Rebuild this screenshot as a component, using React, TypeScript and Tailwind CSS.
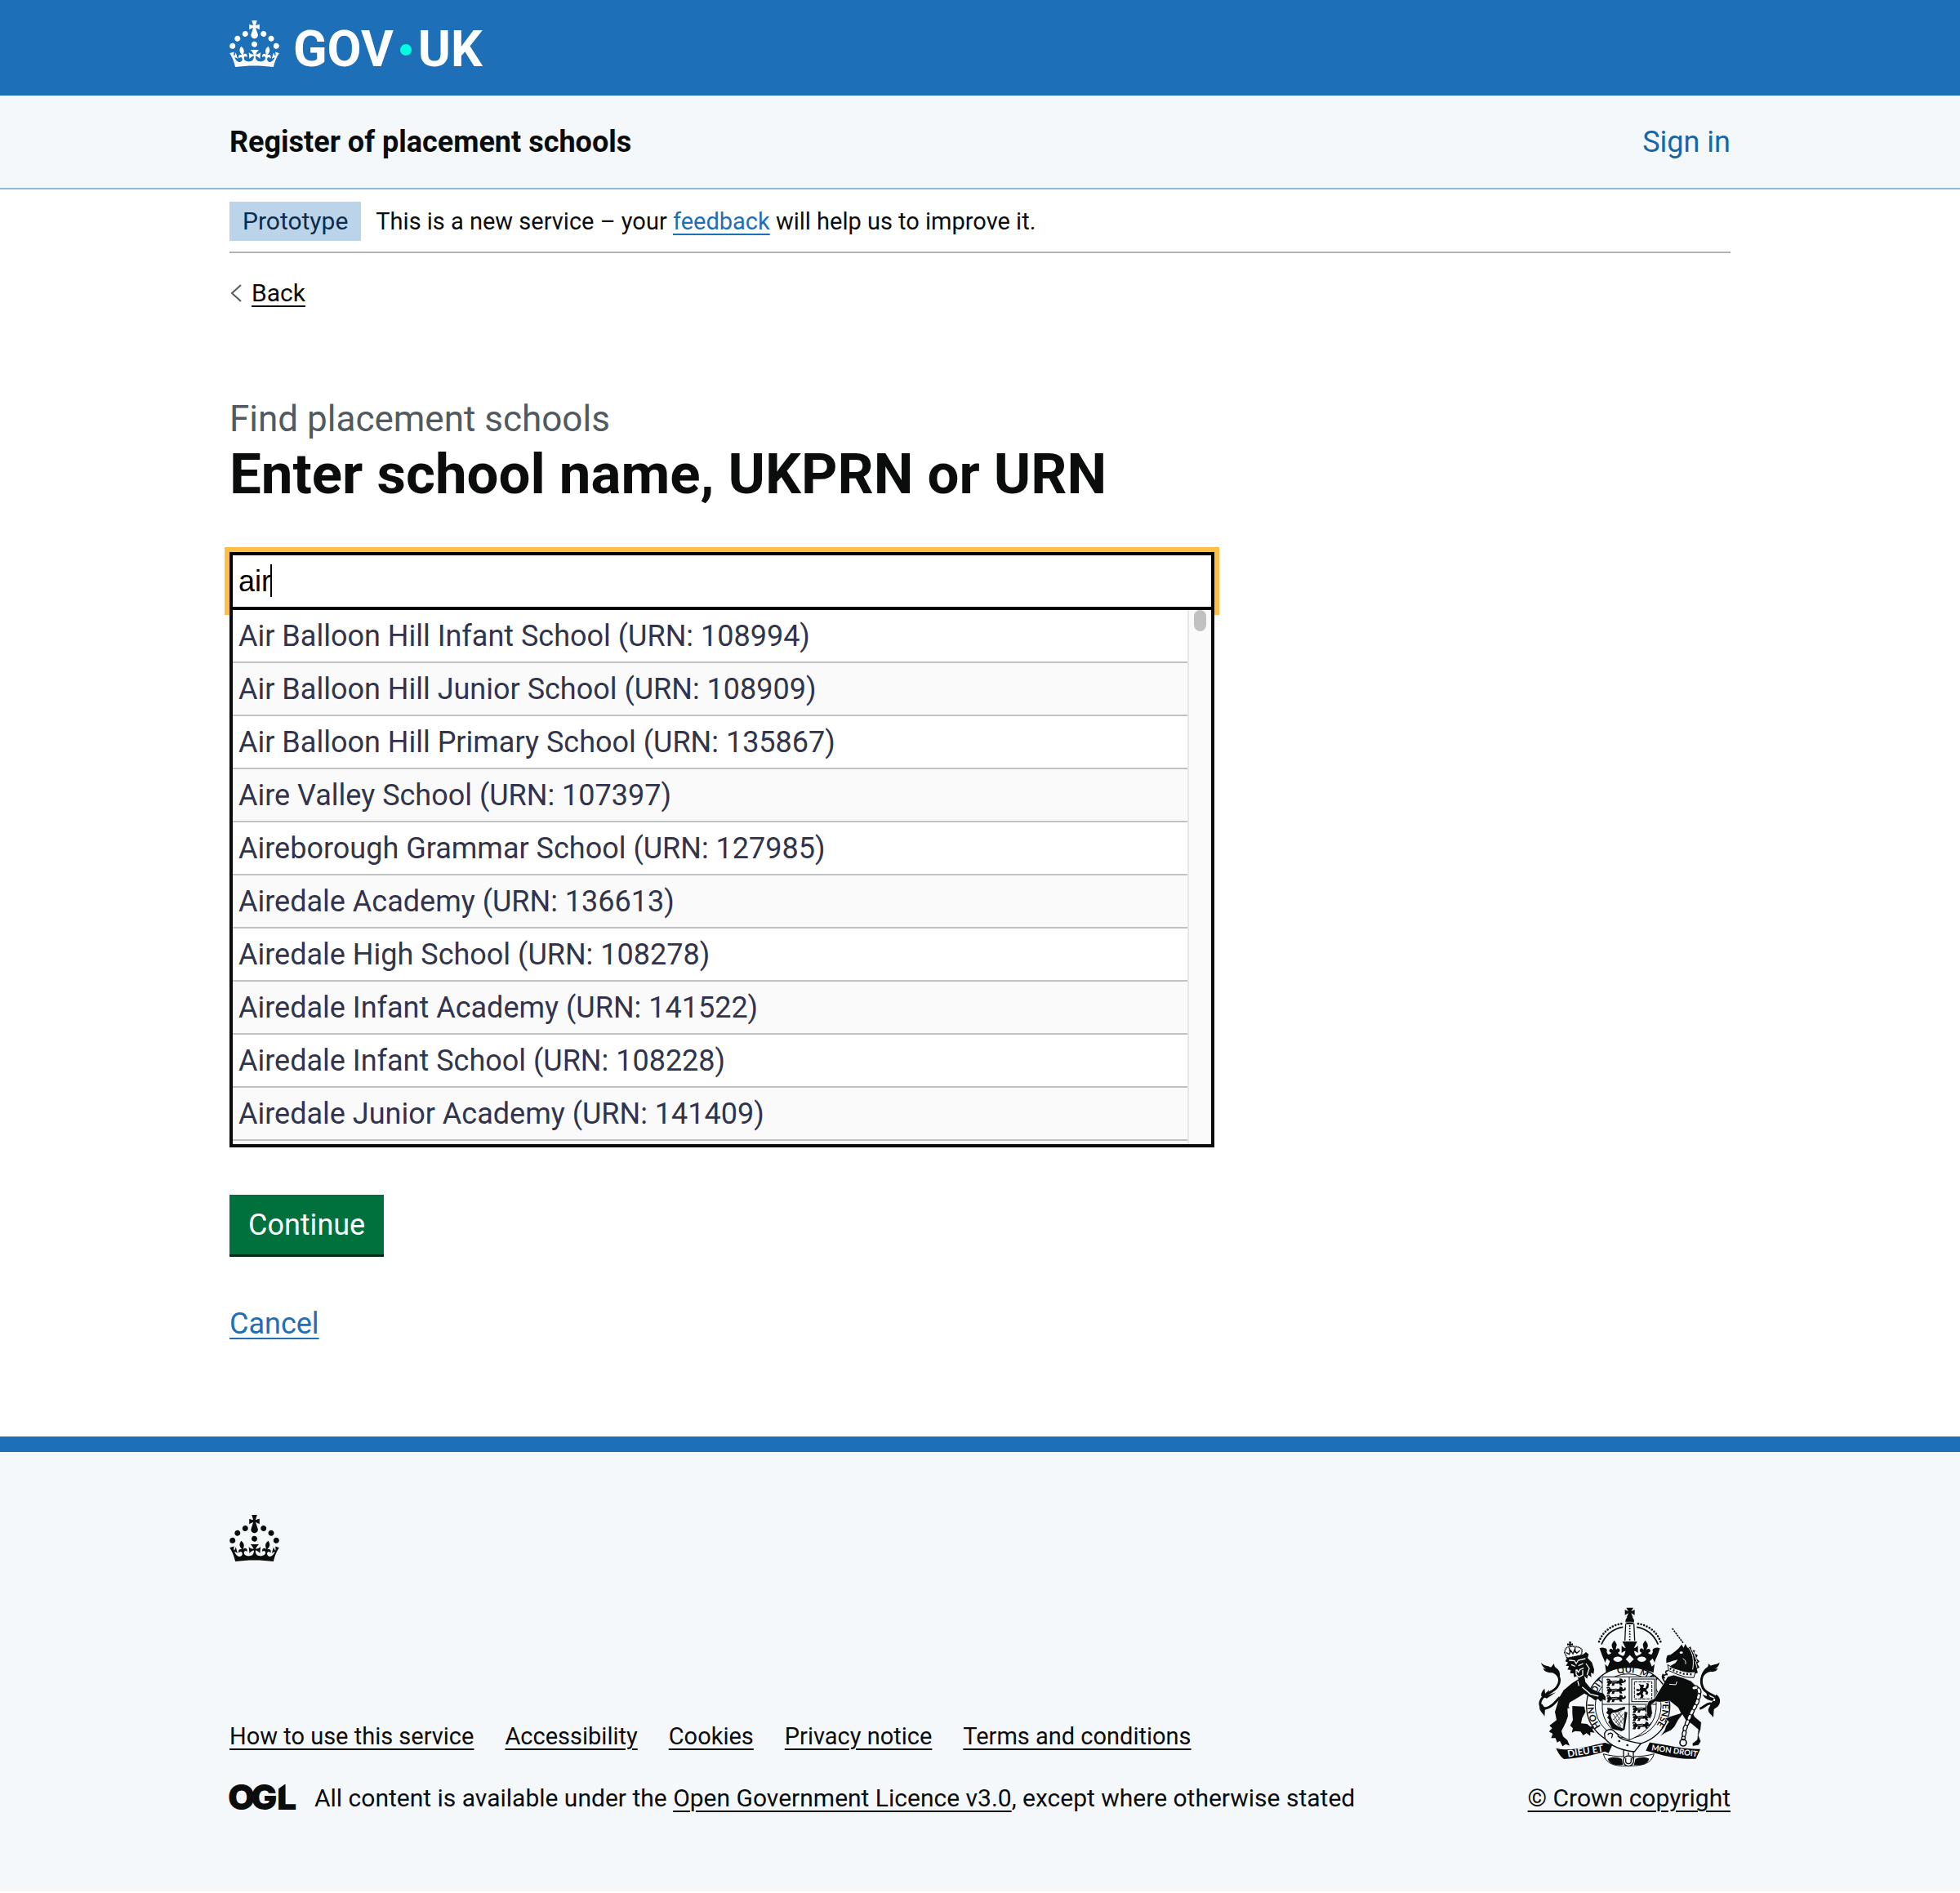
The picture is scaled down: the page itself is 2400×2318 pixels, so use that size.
import React, { useState } from "react";

const schools = [
  "Air Balloon Hill Infant School (URN: 108994)",
  "Air Balloon Hill Junior School (URN: 108909)",
  "Air Balloon Hill Primary School (URN: 135867)",
  "Aire Valley School (URN: 107397)",
  "Aireborough Grammar School (URN: 127985)",
  "Airedale Academy (URN: 136613)",
  "Airedale High School (URN: 108278)",
  "Airedale Infant Academy (URN: 141522)",
  "Airedale Infant School (URN: 108228)",
  "Airedale Junior Academy (URN: 141409)",
];

const footerLinks = [
  "How to use this service",
  "Accessibility",
  "Cookies",
  "Privacy notice",
  "Terms and conditions",
];

const underlined = "underline decoration-2 underline-offset-[5px]";

function Crown() {
  return (
    <svg viewBox="0 0 32 30" className="h-[57px] w-[61px] shrink-0" fill="currentColor" aria-hidden="true">
      <path d="M22.6 10.4c-1 .4-2-.1-2.4-1-.4-.9.1-2 1-2.4.9-.4 2 .1 2.4 1s-.1 2-1 2.4m-5.9 6.7c-.9.4-2-.1-2.4-1-.4-.9.1-2 1-2.4.9-.4 2 .1 2.4 1s-.1 2-1 2.4m10.8-3.7c-1 .4-2-.1-2.4-1-.4-.9.1-2 1-2.4.9-.4 2 .1 2.4 1s0 2-1 2.4m3.3 4.8c-1 .4-2-.1-2.4-1-.4-.9.1-2 1-2.4.9-.4 2 .1 2.4 1s-.1 2-1 2.4M17 4.7l2.3 1.2V2.5l-2.3.7-.2-.2.9-3h-3.4l.9 3-.2.2c-.1.1-2.3-.7-2.3-.7v3.4L15 4.7c.1.1.1.2.2.2l-1.3 4c-.1.2-.1.4-.1.6 0 1.1.8 2 1.9 2.2h.7c1-.2 1.9-1.1 1.9-2.1 0-.2 0-.4-.1-.6l-1.3-4c-.1-.2 0-.2.1-.3m-7.6 5.7c.9.4 2-.1 2.4-1 .4-.9-.1-2-1-2.4-.9-.4-2 .1-2.4 1s0 2 1 2.4m-5 3c.9.4 2-.1 2.4-1 .4-.9-.1-2-1-2.4-.9-.4-2 .1-2.4 1s.1 2 1 2.4m-3.2 4.8c.9.4 2-.1 2.4-1 .4-.9-.1-2-1-2.4-.9-.4-2 .1-2.4 1s0 2 1 2.4m14.8 11c4.4 0 8.6.3 12.3.8 1.1-4.5 2.4-7 3.7-8.8l-2.5-.9c.2 1.3.3 1.9 0 2.7-.4-.4-.8-1.1-1.1-2.3l-1.2 4c.7-.5 1.3-.8 2-.9-1.1 2.5-2.6 3.1-3.5 3-1.1-.2-1.7-1.2-1.5-2.1.3-1.2 1.5-1.5 2.1-.1 1.1-2.3-.8-3-2-2.3 1.9-1.9 2.1-3.5.6-5.6-2.1 1.6-2.1 3.2-1.2 5.5-1.2-1.4-3.2-.6-2.5 1.6.9-1.4 2.1-.5 1.9.8-.2 1.1-1.7 2.1-3.5 1.9-2.7-.2-2.9-2.1-2.9-3.6.7-.1 1.9.5 2.9 1.9l.4-4.3c-1.1 1.1-2.1 1.4-3.2 1.4.4-1.2 2.1-3 2.1-3h-5.4s1.7 1.9 2.1 3c-1.1 0-2.1-.2-3.2-1.4l.4 4.3c1-1.4 2.2-2 2.9-1.9-.1 1.5-.2 3.4-2.9 3.6-1.9.2-3.4-.8-3.5-1.9-.2-1.3 1-2.2 1.9-.8.7-2.3-1.2-3-2.5-1.6.9-2.2.9-3.9-1.2-5.5-1.5 2-1.3 3.7.6 5.6-1.2-.7-3.1 0-2 2.3.6-1.4 1.8-1.1 2.1.1.2.9-.3 1.9-1.5 2.1-.9.2-2.4-.5-3.5-3 .6 0 1.2.3 2 .9l-1.2-4c-.3 1.1-.7 1.9-1.1 2.3-.3-.8-.2-1.4 0-2.7l-2.9.9C1.3 23 2.6 25.5 3.7 30c3.7-.5 7.9-.8 12.3-.8" />
    </svg>
  );
}

function OglLogo() {
  return (
    <svg viewBox="0 0 79 33" className="h-[33px] w-[79px] shrink-0 overflow-visible" role="img" aria-label="Open Government Licence">
      <text x="-2 26 58" y="32" fontFamily="Inter, sans-serif" fontWeight="900" fontSize="43" fill="#0b0c0c">
        OGL
      </text>
      <path d="M59 0h10l-10 7z" fill="#f4f8fb" />
    </svg>
  );
}

/* A small walking lion, used three to a quarter on the shield. */
function Lion({ x, y }: { x: number; y: number }) {
  return (
    <g transform={`translate(${x} ${y})`}>
      <path d="M4 3c6-5 14-2 16 5 8 3 16-3 24 0 8 2 10-3 8-8 8-1 14 4 12 10 4-1 8-3 7-8 8 4 5 13-6 14l-6 1 4 8h-9l-4-7c-6 2-10 0-16 1l-2 8h-9l3-9-8 2-3 8-10-1 5-9-6-4 5-2z" />
      <path d="M24 14l20-3M8 7h6" stroke="#f4f8fb" strokeWidth="2" fill="none" />
    </g>
  );
}

/* Right half of the crown above the shield; mirrored for the left half. */
function CrownHalf() {
  return (
    <g>
      <path d="M432 128c34 6 64 27 79 64" fill="none" stroke="#0b0c0c" strokeWidth="5" />
      <path d="M438 116c36 5 72 30 84 72" fill="none" stroke="#0b0c0c" strokeWidth="8" strokeLinecap="round" strokeDasharray="0 11" />
      <path d="M422 116l3 62" fill="none" stroke="#0b0c0c" strokeWidth="4" />
      <path d="M406 181h28c-2 6-8 16-12 25 8-3 12-7 15-10v28c-4-5-8-8-14-8 1 8 4 14 8 18 8-2 16-6 20-12-8-2-10-9-5-14 4-3 9-1 11 4 3-8-2-13-2-20 2-7 6-11 9-15 5 6 11 14 9 22-1 5-5 8-4 13 4-5 10-5 13 0 2 6-2 10-8 11 4 4 8 6 13 6l5-10c-3-6 0-12 6-13 5-3 12-4 20 0l-7 20c-5 14-13 26-13 38l-4 32c-28-12-54-18-88-18z" />
      <path d="M406 230l16 16-16 16M434 246c6-13 28-13 34 0-6 13-28 13-34 0zM480 254l11-11 9 20-12 10z" fill="#f4f8fb" />
    </g>
  );
}

function CoatOfArms() {
  return (
    <svg viewBox="72 52 666 591" className="h-[197px] w-[222px]" fill="#0b0c0c" role="img" aria-label="Royal coat of arms">
      <defs>
        <path id="garterText" d="M304 497A126 123 0 1 1 498 497" />
        <clipPath id="shieldShape">
          <path d="M306 311h198v108c0 60-40 100-99 124-59-24-99-64-99-124z" />
        </clipPath>
      </defs>

      {/* Garter */}
      <ellipse cx="401" cy="418" rx="153" ry="144" fill="#f4f8fb" stroke="#0b0c0c" strokeWidth="4" />
      <ellipse cx="401" cy="418" rx="121" ry="118" fill="none" stroke="#0b0c0c" strokeWidth="3" />
      <g fontFamily="Lato, sans-serif" fontWeight="700" fontSize="33">
        <text><textPath href="#garterText" startOffset="6">HONI</textPath></text>
        <text><textPath href="#garterText" startOffset="112">SOIT</textPath></text>
        <text><textPath href="#garterText" startOffset="242">QUI</textPath></text>
        <text><textPath href="#garterText" startOffset="322">MAL</textPath></text>
        <text><textPath href="#garterText" startOffset="448">PENSE</textPath></text>
      </g>

      {/* Shield */}
      <path d="M306 311h198v108c0 60-40 100-99 124-59-24-99-64-99-124z" fill="#f4f8fb" stroke="#0b0c0c" strokeWidth="3" />
      <g clipPath="url(#shieldShape)">
        <Lion x={317} y={317} />
        <Lion x={317} y={347} />
        <Lion x={317} y={377} />
        <rect x="414" y="319" width="84" height="83" fill="none" stroke="#0b0c0c" strokeWidth="3" />
        <rect x="424" y="329" width="64" height="63" fill="none" stroke="#0b0c0c" strokeWidth="3" strokeDasharray="12 3" />
        <path d="M440 336l10 5c5-4 10-2 9 4l-4 6 9 2 6-12-3-8 10 3-1 14-9 9 8 9-3 9-8-2 2-7-8-4-4 8 4 9-4 9-10-1 4-6-2-8-8 6-8-5 4-5 8-2 5-7-12 2-6-6 6-3 8 2 3-8z" />
        <Lion x={412} y={416} />
        <Lion x={412} y={446} />
        <Lion x={412} y={476} />
        <path d="M324 424l16 3 8 6c14 0 22-10 42-12l-2 10c-16 2-24 12-42 12-10 2-10 12-6 20 4 16 16 28 34 34l8 4 6-62 10 2-10 64-12 6c-10-6-24-4-34-10-6-8-6-16-14-22l4-10-8-8 6-10-10-8 6-8z" />
        <path d="M345 447l30 46M354 443l26 40M364 440l20 28M348 466l24 30M378 434l-34 36M384 446l-30 34M384 464l-22 26" stroke="#0b0c0c" strokeWidth="2" />
        <path d="M405 311v232M306 412h198" stroke="#0b0c0c" strokeWidth="3" />
      </g>

      {/* Crown */}
      <g>
        <path d="M394 57h26l-8 14 13-7v20l-13-7 7 16h-24l7-16-13 7v-20l13 7z" />
        <circle cx="407" cy="106" r="16" />
        <path d="M392 110h30" stroke="#f4f8fb" strokeWidth="2" />
        <path d="M392 118h30v58h-30z" fill="#f4f8fb" />
        <path d="M407 124v52" stroke="#0b0c0c" strokeWidth="6" strokeLinecap="round" strokeDasharray="0 10" />
        <CrownHalf />
        <g transform="translate(814 0) scale(-1 1)">
          <CrownHalf />
        </g>
      </g>

      {/* Lion supporter */}
      <g>
        <path d="M150 386c-14 14-26 36-50 40-20 4-28-14-18-32 10-20 42-24 58-46 16-22 8-46-12-54" fill="none" stroke="#0b0c0c" strokeWidth="9" />
        <path d="M81 258c10 14 24 10 36 18l12-14c0 8 2 14 10 18 10 8 14 20 10 34-8-14-20-18-34-18-16-2-24-8-26-16l10 2c-10-6-16-14-18-24zM82 382c-2-12 4-20 12-28l2 18 16-14-6 20 30-10-34 22zM84 410l12 16-2 30c-6-12-22-20-18-38z" />
        <path d="M183 182h10l-3 8 8-2v8l-8-2 2 8h-8l1-8-8 2v-8l8 2z" />
        <path d="M168 222c0-14 8-22 20-22 16-2 40 0 44 14l-4 20-52 8z" fill="#f4f8fb" stroke="#0b0c0c" strokeWidth="5" strokeDasharray="4 2" />
        <path d="M174 222l10 6 6-14 8 12 6-14 8 12 12-10M184 204l4 20M206 202v20" fill="none" stroke="#0b0c0c" strokeWidth="4" />
        <path d="M176 242L236 228l10-8 10 8-4 14 16 16 8 26-2 16-10-4 2 16-12-8-4 14-10-10 4 22 18 22 28 14 20 6 8 12v14l-10-4-8 8-10-10-10 6-18-14-22-12-25 16-29 17-8 25 2 25-8 23-16 32 6 20 16 14 8 20-14-6-12 8-10-20-10 6-6-16-16 0 6-16-14-8 12-12-10-10 26-20-6-30 17-55 15-25 30-25 24-15-4-12-12 4-2-14-12 0 2-12-12-2 6-12-12-2 8-12-10-4z" />
        <path d="M184 250l20 2 6 10 8-12 26-6M192 266l14 6M218 270l18-8M212 284l6 10 6-10 14-6M210 284v18l10 10 14-8v-18M246 262l12 18-8 24M216 326l4 18M232 348l30 26 30 8" fill="none" stroke="#f4f8fb" strokeWidth="4" />
        <path d="M196 418l44 2 4 20-12 22-4 20 22 2 12 10 14-2-6 12 8 12-16-2v14l-14-10-12 8-10-14-20-2-12 6 4-16-10-10 10-20-2-25z" />
        <path d="M184 404c-8 6-8 14 0 22" fill="none" stroke="#0b0c0c" strokeWidth="4" />
      </g>

      {/* Unicorn supporter */}
      <g>
        <path d="M563 133l42 56" fill="none" stroke="#0b0c0c" strokeWidth="5" strokeDasharray="7 3" />
        <path d="M541 244l4-12 12-2 18-14 12-10 10-14 8 12 6-14 8 14 12-4 2 12 14 2-4 10 14 8-6 10 12 12-8 8 8 14-10 6 4 14-12 4-2 12-16-4-20 4c-20-10-30-24-44-28l-12-8 6-6 18-10 8-12-18 4-10 4-14 4z" />
        <ellipse cx="596" cy="222" rx="6" ry="4" fill="#f4f8fb" />
        <path d="M622 202c16 20 22 46 16 82M634 208l14 30M644 228l10 28M648 254l6 24M602 244c8 4 12 10 10 20" fill="none" stroke="#f4f8fb" strokeWidth="3" />
        <path d="M546 266l18 12 20 6 18 6 22 4 24-2-6 22-30-2-30-10-32-14z" fill="#f4f8fb" stroke="#0b0c0c" strokeWidth="3" />
        <path d="M554 280l24 12 28 8 30 2" fill="none" stroke="#0b0c0c" strokeWidth="7" strokeDasharray="6 7" />
        <path d="M546 310l22-6 34 10 30 12 20 20 6 34-6 34-14 28 8 16 24 20-2 24-8 24 8 22-8 14-22 4-2-10 18-14 4-38-24-20-22-14-12-20-14 18-14 26-14 14-22 10-18 12 16-22 6-18 10-14-14-12 20-8 38-12-10-20-30-24-36 4-18-2-14 12 4 30-8 22-12-12-2-32 8-22 22-10z" stroke="#f4f8fb" strokeWidth="2" />
        <path d="M548 288c-14 0-10 12-2 14-14 0-22 8-10 14M530 300c-8 12 0 20 6 30" fill="none" stroke="#0b0c0c" strokeWidth="5" />
        <path d="M552 338l24 2 4-12" fill="none" stroke="#f4f8fb" strokeWidth="3" />
        <path d="M664 428c20-6 26-24 44-18 20 4 20-14 16-22-8-14-36-12-48-36-12-26-6-56 20-64" fill="none" stroke="#0b0c0c" strokeWidth="9" />
        <path d="M737 258c-10 8-22 6-32 12l-10-8c2 10-2 14-10 18-10 10-18 24-16 40 8-14 20-26 34-28 16 2 24-4 28-12l-12 2c10-4 16-14 18-24zM724 376c16 8 20 30 6 44l-14 10-2 30c-8-12-22-16-18-32zM722 392l-20-8-14-20 2 18-16-6c8 16 24 24 46 24z" />
        <path d="M642 352c14-6 22 6 20 22l-8 30-24 46-20 50-6 36" fill="none" stroke="#0b0c0c" strokeWidth="17" strokeLinecap="round" strokeDasharray="9 12" />
        <path d="M642 352c14-6 22 6 20 22l-8 30-24 46-20 50-6 36" fill="none" stroke="#f4f8fb" strokeWidth="9" strokeLinecap="round" strokeDasharray="9 12" />
        <circle cx="603" cy="553" r="12" fill="none" stroke="#0b0c0c" strokeWidth="5" />
      </g>

      {/* Strap and buckle */}
      <path d="M314 520c4-14 20-20 32-12l18 16c-6 12 34 24 84 32l-24 30c-40-4-84-18-108-48z" fill="#f4f8fb" stroke="#0b0c0c" strokeWidth="4" />
      <path d="M326 524c4-8 14-8 18-2l-4 14M384 580v36a18 18 0 0 0 36 0v-32" fill="none" stroke="#0b0c0c" strokeWidth="4" />
      <circle cx="368" cy="547" r="4" />
      <circle cx="398" cy="562" r="4" />
      <path d="M310 594c20 6 50 10 76 10 0 20 6 28 16 34-40 2-82-2-92-44zM496 594c-20 6-50 10-74 10 0 20-8 26-20 34 48 0 84-6 94-44z" fill="#f4f8fb" stroke="#0b0c0c" strokeWidth="3" />
      <path d="M326 612c16-10 38-6 52 0l4 22c-24 4-50-2-56-22zM478 612c-16-10-36-6-50 0l-6 22c24 4 50-2 56-22z" />
      <circle cx="402" cy="620" r="19" fill="#f4f8fb" stroke="#0b0c0c" strokeWidth="4" />
      <path d="M392 610v10a10 10 0 0 0 20 0v-10M402 588v10" fill="none" stroke="#0b0c0c" strokeWidth="4" />

      {/* Motto ribbons */}
      <path d="M136 573c60 14 118-8 180-20l27 8-14 30-14-6c-44 14-96 24-150 28-16-12-22-26-29-40z" />
      <path d="M666 576c-64 2-124-16-186-24l-14 30 24 6c46 14 100 26 160 24z" />
      <g fontFamily="Lato, sans-serif" fontWeight="700" fill="#f4f8fb">
        <text transform="translate(180 606) rotate(-9)" fontSize="35">DIEU ET</text>
        <text transform="translate(486 581) rotate(8)" fontSize="29">MON DROIT</text>
      </g>
    </svg>
  );
}

export default function App() {
  const [query, setQuery] = useState("air");

  return (
    <div className="bg-white font-[Roboto,sans-serif] text-[#0b0c0c]">
      <header>
        <div className="bg-[#1d70b8] px-8 pt-[25px] pb-7 text-white">
          <a href="#" aria-label="GOV.UK" className="mx-auto flex max-w-[1838px] items-start gap-[17px]">
            <Crown />
            <span className="flex items-center gap-2 pt-[7px] text-[61px] leading-[57px] font-bold">
              <span>GOV</span>
              <span className="size-[14px] rounded-full bg-[#00ffe0]" />
              <span>UK</span>
            </span>
          </a>
        </div>
        <div className="border-b-2 border-[#8eb8dc] bg-[#f4f8fb] px-8 pt-[35px] pb-[33px]">
          <div className="mx-auto flex max-w-[1838px] items-center justify-between text-[36px] leading-[45px]">
            <a href="#" className="font-bold">Register of placement schools</a>
            <a href="#" className="text-[#1a65a6]">Sign in</a>
          </div>
        </div>
      </header>

      <div className="px-8">
        <div className="mx-auto max-w-[1838px]">
          <div className="flex items-center gap-[18px] border-b-2 border-[#b1b4b6] pt-[15px] pb-[13px]">
            <strong className="bg-[#bbd4ea] px-4 text-[30px] leading-[48px] font-normal text-[#0c2d4a]">Prototype</strong>
            <p className="text-[29px] leading-[48px]">
              This is a new service – your{" "}
              <a href="#" className={`${underlined} text-[#1d70b8]`}>feedback</a> will help us to improve it.
            </p>
          </div>

          <a href="#" className="mt-[31px] flex w-fit items-center gap-3 text-[30px] leading-[36px]">
            <svg viewBox="0 0 15 22" className="h-[22px] w-[15px]" fill="none" stroke="#505a5f" strokeWidth="2" aria-hidden="true">
              <path d="M14 1L3 11l11 10" />
            </svg>
            <span className={underlined}>Back</span>
          </a>

          <main className="max-w-[1206px] pt-[108px] pb-[115px]">
            <span className="block text-[44px] leading-[56px] text-[#505a5f]">Find placement schools</span>
            <h1 className="text-[69px] leading-[80px] font-bold">
              <label htmlFor="school">Enter school name, UKPRN or URN</label>
            </h1>

            <form className="mt-[55px]" onSubmit={(e) => e.preventDefault()}>
              <div className="relative">
                <input
                  id="school"
                  type="text"
                  role="combobox"
                  aria-expanded="true"
                  aria-controls="school-options"
                  autoComplete="off"
                  value={query}
                  onChange={(e) => setQuery(e.target.value)}
                  className="block h-[71px] w-full border-4 border-black bg-white px-[7px] font-['Liberation_Sans',sans-serif] text-[36px] text-black caret-transparent shadow-[0_0_0_6px_#ffbf47] outline-none"
                />
                <span className="absolute top-[15px] left-[50px] h-10 w-[2px] bg-black" />
              </div>
              <div className="relative flex h-[658px] overflow-hidden border-4 border-t-0 border-[#0b0c0c] bg-[#fafafa]">
                <ul id="school-options" role="listbox" aria-label="Schools" className="grow text-[36px] leading-[45px] text-[#31344b]">
                  {schools.map((school) => (
                    <li
                      key={school}
                      role="option"
                      aria-selected="false"
                      className="border-b-2 border-[#bfc1c3] px-[7px] pt-[10px] pb-2 odd:bg-white even:bg-[#fafafa]"
                    >
                      {school}
                    </li>
                  ))}
                </ul>
                <div className="flex w-[29px] shrink-0 justify-center border-l-2 border-[#e8e8e8] bg-[#fafafa]">
                  <div className="h-[26px] w-[15px] rounded-full bg-[#c1c1c1]" />
                </div>
              </div>

              <button type="submit" className="mt-[58px] block bg-[#00703c] px-[23px] pt-[15px] pb-[13px] text-[36px] leading-[45px] text-white shadow-[0_3px_0_#002d18]">
                Continue
              </button>
            </form>

            <a href="#" className={`${underlined} mt-[63px] block w-fit text-[36px] leading-[45px] text-[#1d70b8]`}>Cancel</a>
          </main>
        </div>
      </div>

      <footer className="border-t-[19px] border-[#1d70b8] bg-[#f4f8fb] px-8 pt-[77px] pb-[96px]">
        <div className="mx-auto max-w-[1838px]">
          <Crown />
          <div className="mt-[55px] flex items-end justify-between">
            <div>
              <ul className="flex flex-wrap gap-x-[38px] text-[29px] leading-[36px]">
                {footerLinks.map((link) => (
                  <li key={link}>
                    <a href="#" className={underlined}>{link}</a>
                  </li>
                ))}
              </ul>
              <div className="mt-10 flex items-start gap-[25px] text-[30px] leading-[36px]">
                <OglLogo />
                <p>
                  All content is available under the{" "}
                  <a href="#" className={underlined}>Open Government Licence v3.0</a>, except where otherwise stated
                </p>
              </div>
            </div>
            <a href="#" className="flex flex-col items-center gap-5 text-[30px] leading-[36px]">
              <CoatOfArms />
              <span className={underlined}>© Crown copyright</span>
            </a>
          </div>
        </div>
      </footer>
    </div>
  );
}
